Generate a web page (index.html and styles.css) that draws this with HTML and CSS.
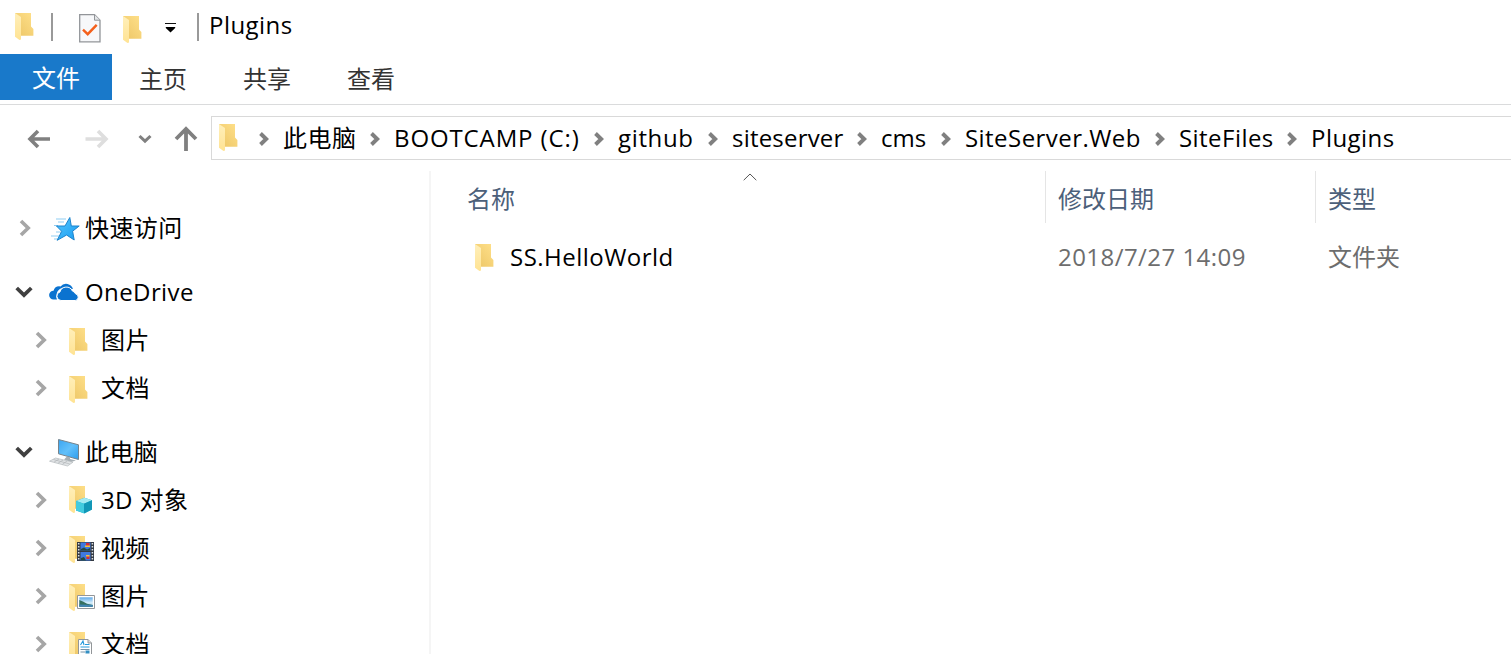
FILE: index.html
```html
<!DOCTYPE html>
<html lang="zh-CN">
<head>
<meta charset="utf-8">
<title>Plugins</title>
<link rel="stylesheet" href="styles.css">
</head>
<body>
<svg class="defs" aria-hidden="true">
  <defs>
    <linearGradient id="back" x1="0" x2="1" y1="1" y2="0"><stop offset="0" stop-color="#ecc565"/><stop offset="1" stop-color="#ffe08a"/></linearGradient>
    <linearGradient id="flap" x1="0" x2="0" y1="0" y2="1"><stop offset="0" stop-color="#ffefba"/><stop offset="1" stop-color="#ffe393"/></linearGradient>
    <linearGradient id="star" x1="0" x2="1" y1="0" y2="1"><stop offset="0" stop-color="#55c6ff"/><stop offset="1" stop-color="#189cf0"/></linearGradient>
    <linearGradient id="screen" x1="0" x2="1" y1="0" y2="1"><stop offset="0" stop-color="#3aa5f2"/><stop offset=".5" stop-color="#62c0fa"/><stop offset="1" stop-color="#2d9cec"/></linearGradient>
    <linearGradient id="sky" x1="0" x2="0" y1="0" y2="1"><stop offset="0" stop-color="#5fa9e8"/><stop offset=".6" stop-color="#d8effb"/><stop offset="1" stop-color="#7cb6cf"/></linearGradient>
    <symbol id="folder" viewBox="0 0 27 28">
      <path d="M0 0H16V13.5L18.4 16V22.7H5L0 20Z" fill="url(#back)"/>
      <path d="M0 0L6 4V26.5L4.5 27L0 23.8Z" fill="url(#flap)"/>
    </symbol>
    <symbol id="chev" viewBox="0 0 12 18"><path d="M2 2L9.2 9L2 16" fill="none" stroke="currentColor" stroke-width="3.6"/></symbol>
    <symbol id="open" viewBox="0 0 18 12"><path d="M1.7 2L9 9L16.3 2" fill="none" stroke="currentColor" stroke-width="3.8"/></symbol>
    <symbol id="crumb" viewBox="0 0 10 14"><path d="M1.5 1.5L7.2 7L1.5 12.5" fill="none" stroke="currentColor" stroke-width="3.9"/></symbol>
  </defs>
</svg>

<header class="titlebar">
  <svg class="folder"><use href="#folder"/></svg>
  <i class="sep first"></i>
  <svg class="props" viewBox="0 0 22 29">
    <path d="M.7 .7H15.5L21 6.2V27.8H.7Z" fill="#f7f8fa" stroke="#929599" stroke-width="1.3"/>
    <path d="M15.5 .7V6.2H21" fill="#e4e6e8" stroke="#929599"/>
    <path d="M4 15.7L8.7 20.2L17.7 10.8" fill="none" stroke="#f4601c" stroke-width="2.4"/>
  </svg>
  <svg class="folder second"><use href="#folder"/></svg>
  <svg class="more" viewBox="0 0 11 10"><path d="M0 .5H11" stroke="#111"/><path d="M.8 4H10.2V5L5.5 9.5L.8 5Z" fill="#000"/></svg>
  <i class="sep second"></i>
  <span class="title">Plugins</span>
</header>

<nav class="tabs">
  <span class="tab active">文件</span><span class="tab">主页</span><span class="tab">共享</span><span class="tab">查看</span>
</nav>

<div class="address">
  <div class="arrows">
    <svg class="back" viewBox="0 0 24 20"><path d="M23 10H3M11 2L3 10L11 18" fill="none" stroke="#808080" stroke-width="3.6"/></svg>
    <svg class="forward" viewBox="0 0 24 20"><path d="M.5 10H21M13 2L21 10L13 18" fill="none" stroke="#dedede" stroke-width="3.6"/></svg>
    <svg class="recent" viewBox="0 0 14 10"><path d="M1.5 2L7 7.2L12.5 2" fill="none" stroke="#808080" stroke-width="3"/></svg>
    <svg class="up" viewBox="0 0 24 26"><path d="M12 25V3M2 13L12 3L22 13" fill="none" stroke="#808080" stroke-width="3.8"/></svg>
  </div>
  <div class="path">
    <svg class="folder"><use href="#folder"/></svg>
    <svg class="crumb-sep root"><use href="#crumb"/></svg>
    <span class="crumb pc"><b>此电脑</b><svg class="crumb-sep"><use href="#crumb"/></svg></span>
    <span class="crumb drive"><b>BOOTCAMP (C:)</b><svg class="crumb-sep"><use href="#crumb"/></svg></span>
    <span class="crumb github"><b>github</b><svg class="crumb-sep"><use href="#crumb"/></svg></span>
    <span class="crumb server"><b>siteserver</b><svg class="crumb-sep"><use href="#crumb"/></svg></span>
    <span class="crumb cms"><b>cms</b><svg class="crumb-sep"><use href="#crumb"/></svg></span>
    <span class="crumb web"><b>SiteServer.Web</b><svg class="crumb-sep"><use href="#crumb"/></svg></span>
    <span class="crumb files"><b>SiteFiles</b><svg class="crumb-sep"><use href="#crumb"/></svg></span>
    <span class="crumb"><b>Plugins</b></span>
  </div>
</div>

<main class="content">
  <aside class="tree">
    <section>
      <div class="row"><svg class="chev"><use href="#chev"/></svg>
        <svg class="root-icon" viewBox="0 0 32 28">
          <path d="M7 4H17M9 7H15M5 10.5H9M7 17H12M2 21H10M5 24H9" stroke="#8fcdf2" stroke-width="1"/>
          <path d="M20.8 2.5L22.3 11H30.2L23.6 16.2L25.2 25L17.6 20L8.2 25.3L12.7 16.3L7.5 11H16Z" fill="url(#star)" stroke="#1d83cc" stroke-width="1"/>
        </svg><span>快速访问</span></div>
    </section>
    <section>
      <div class="row"><svg class="open"><use href="#open"/></svg>
        <svg class="root-icon" viewBox="0 0 32 28">
          <path d="M8 20.5H4.5A4.4 4.4 0 0 1 4.5 11.7A6.3 6.3 0 0 1 11.5 7.5A7.2 7.2 0 0 1 24 10A7 7 0 0 0 20 10A8 8 0 0 0 7.7 14.7Q6.6 18 8 20.5Z" fill="#0b73d0"/>
          <path d="M12 21.5A4.4 4.4 0 0 1 11 12.9A6.6 6.6 0 0 1 23.4 12A5.2 5.2 0 0 1 26.5 14.8A3.4 3.4 0 0 1 26.3 21.5Z" fill="#0b73d0" stroke="#fff" stroke-width="1"/>
        </svg><span>OneDrive</span></div>
      <div class="row child"><svg class="chev"><use href="#chev"/></svg><svg class="folder"><use href="#folder"/></svg><span>图片</span></div>
      <div class="row child"><svg class="chev"><use href="#chev"/></svg><svg class="folder"><use href="#folder"/></svg><span>文档</span></div>
    </section>
    <section>
      <div class="row"><svg class="open"><use href="#open"/></svg>
        <svg class="root-icon" viewBox="0 0 32 28">
          <path d="M9.5 .5L29.5 5.8V20.5L9.5 14.8Z" fill="url(#screen)" stroke="#77838b"/>
          <path d="M18 17.5L21 18.2V20L27 21.5L22 23L15 20.5Z" fill="#a7afb4"/>
          <path d="M6.5 19L24 23.2L18.5 27L.5 22.2Z" fill="#e1e4e6" stroke="#b5babd" stroke-width=".7"/>
          <path d="M4.5 20.5L20.8 25M10 20L5 23.2M14 21L9 24.3M18 22L13.4 25.4" stroke="#b0b5b8" stroke-width=".7"/>
        </svg><span>此电脑</span></div>
      <div class="row child"><svg class="chev"><use href="#chev"/></svg>
        <svg class="folder objects" viewBox="0 0 27 28"><use href="#folder" width="27" height="28"/>
          <path d="M7 15L15.5 11.8L23 14.2V23.5L15.5 27.5L7 24.5Z" fill="#19afc9"/><path d="M7 15L15.5 11.8L23 14.2L15 17.8Z" fill="#a3eaf2"/><path d="M7 15L15 17.8V27.3L7 24.5Z" fill="#42cbdf"/><path d="M15 17.8L23 14.2V23.5L15 27.3Z" fill="#1297b7"/>
        </svg><span>3D 对象</span></div>
      <div class="row child"><svg class="chev"><use href="#chev"/></svg>
        <svg class="folder" viewBox="0 0 27 28"><use href="#folder" width="27" height="28"/>
          <path d="M8 6H25V25H8Z" fill="#343a43"/><path d="M11.5 6.5H21.5V14.5H11.5ZM11.5 16H21.5V24.5H11.5Z" fill="#3f79df"/>
          <path d="M9.7 7V25M23.4 7V25" stroke="#dce1e6" stroke-width="1.5" stroke-dasharray="1.6 1.4"/>
          <path d="M17 7H20.5V10H17ZM17.5 20H20.5V23H17.5Z" fill="#d72c38"/><path d="M16 9.5H21V11H16ZM17 19H20.5V20.5H17Z" fill="#edc33d"/><path d="M12 13L15 11.5L18 13.5L21 12V14.5H12ZM12 22L15 21L17 24.5H12Z" fill="#274c42"/>
        </svg><span>视频</span></div>
      <div class="row child"><svg class="chev"><use href="#chev"/></svg>
        <svg class="folder" viewBox="0 0 27 28"><use href="#folder" width="27" height="28"/>
          <path d="M8.5 11.5H25.5V24.5H8.5Z" fill="#fff" stroke="#939699"/><path d="M10.3 13.3H23.7V22.7H10.3Z" fill="url(#sky)"/><path d="M10.3 16L14 17.5L18 19.8L23.7 21V22.7H10.3Z" fill="#367060"/><path d="M10.3 20.5L23.7 21V22.7H10.3Z" fill="#4285b5"/>
        </svg><span>图片</span></div>
      <div class="row child"><svg class="chev"><use href="#chev"/></svg>
        <svg class="folder" viewBox="0 0 27 28"><use href="#folder" width="27" height="28"/>
          <path d="M9.5 7.5H19L22.5 11V28H9.5Z" fill="#fff" stroke="#929699"/><path d="M19 7.5V11H22.5" fill="#ddd" stroke="#929699"/><path d="M11.5 13L14 9L15 13M16 12.5H20.5M11.5 15H20.5" fill="none" stroke="#269bdc" stroke-width="1.1"/><path d="M11.5 17.5H20.5M11.5 20H16M11.5 22.5H20.5M11.5 25H20.5" stroke="#7894a8"/><path d="M16.5 18.5H20.5V21.5H16.5Z" fill="#338fc2"/>
        </svg><span>文档</span></div>
    </section>
  </aside>

  <div class="list">
    <div class="heads">
      <span class="name">名称<svg class="sort" viewBox="0 0 14 8"><path d="M.7 7.2L7 1L13.3 7.2" fill="none" stroke="#555" stroke-width="1"/></svg></span>
      <span class="date">修改日期</span>
      <span class="type">类型</span>
    </div>
    <div class="file">
      <span class="name"><svg class="folder"><use href="#folder"/></svg><b>SS.HelloWorld</b></span>
      <span class="date">2018/7/27 14:09</span>
      <span class="type">文件夹</span>
    </div>
  </div>
</main>
</body>
</html>
```

FILE: styles.css
```css
* { box-sizing: border-box; }
body {
  margin: 0;
  width: 1511px;
  height: 654px;
  overflow: hidden;
  display: flex;
  flex-direction: column;
  background: #fff;
  color: #000;
  font: 24px/48px "Open Sans", "Noto Sans CJK SC", sans-serif;
  white-space: nowrap;
}
b { font-weight: 400; }
svg { display: block; flex: none; }
.defs { width: 0; height: 0; position: absolute; }
.folder { width: 27px; height: 28px; }

.titlebar { height: 54px; flex: none; display: flex; align-items: flex-start; padding: 13px 0 0 15px; }
.sep { width: 2px; height: 28px; background: #999; flex: none; }
.sep.first { margin-left: 9px; }
.props { width: 22px; height: 29px; margin: 1px 0 0 26px; }
.folder.second { margin: 3px 0 0 22px; }
.more { width: 11px; height: 10px; margin: 10px 0 0 15px; }
.sep.second { margin-left: 21px; }
.title { line-height: 28px; margin: -2px 0 0 10px; letter-spacing: .45px; }

.tabs { height: 51px; flex: none; display: flex; border-bottom: 1px solid #dadbdc; color: #333; }
.tab { width: 104px; height: 46px; line-height: 50px; text-align: center; }
.tab.active { width: 112px; margin-right: -1px; line-height: 47px; background: #1979ca; color: #fff; }

.address { height: 66px; flex: none; display: flex; padding-top: 11px; }
.arrows { width: 211px; height: 44px; display: flex; align-items: center; padding: 2px 0 0 27px; }
.back, .forward { width: 24px; height: 20px; }
.forward { margin-left: 34px; }
.recent { width: 14px; height: 10px; margin-left: 29px; }
.up { width: 24px; height: 26px; margin-left: 22px; }
.path { flex: 1; height: 44px; border: 1px solid #d9d9d9; border-right: 0; display: flex; align-items: center; padding-left: 7px; }
.crumb-sep { width: 10px; height: 14px; color: #808080; margin: 2px 14px 0 0; }
.crumb-sep.root { margin: 2px 14px 0 13px; }
.crumb { display: flex; align-items: center; justify-content: space-between; flex: none; line-height: 42px; letter-spacing: .45px; }
.pc { width: 111px; }
.drive { width: 224px; letter-spacing: .88px; }
.github { width: 114px; letter-spacing: .65px; }
.server { width: 149px; letter-spacing: .2px; }
.cms { width: 84px; letter-spacing: 0; }
.web { width: 214px; }
.files { width: 132px; }

.content { flex: 1; min-height: 0; display: flex; }
.tree { width: 431px; border-right: 2px solid #f5f5f5; padding-top: 34px; overflow: hidden; }
.tree section { margin-bottom: 16px; }
.row { height: 48px; display: flex; align-items: center; padding-left: 19px; }
.row.child { padding-left: 35px; }
.chev { width: 12px; height: 18px; color: #a6a6a6; margin-bottom: 2px; }
.open { width: 18px; height: 12px; color: #404040; margin: 0 0 2px -4px; }
.root-icon { width: 32px; height: 28px; margin-left: 18px; }
.open + .root-icon { margin-left: 16px; }
.row span { margin: 0 0 2px 4px; letter-spacing: .4px; }
.row .folder { margin: 2px 0 0 22px; }
.row .folder.objects { margin: -2px 0 0 22px; }
.row.child span { margin-left: 5px; }

.list { flex: 1; }
.heads { height: 52px; display: flex; color: #4c607a; line-height: 55px; }
.heads .name { width: 614px; padding-left: 36px; position: relative; }
.heads .date, .heads .type { border-left: 1px solid #e5e5e5; padding-left: 12px; }
.heads .date { width: 270px; }
.sort { width: 14px; height: 8px; position: absolute; left: 312px; top: 2px; }
.file { height: 48px; margin-top: 11px; display: flex; color: #6d6d6d; line-height: 46px; }
.file .name { width: 627px; padding-left: 44px; display: flex; align-items: center; color: #000; }
.file b { margin: 0 0 2px 8px; letter-spacing: .48px; }
.file .date { width: 270px; letter-spacing: .45px; }
```
